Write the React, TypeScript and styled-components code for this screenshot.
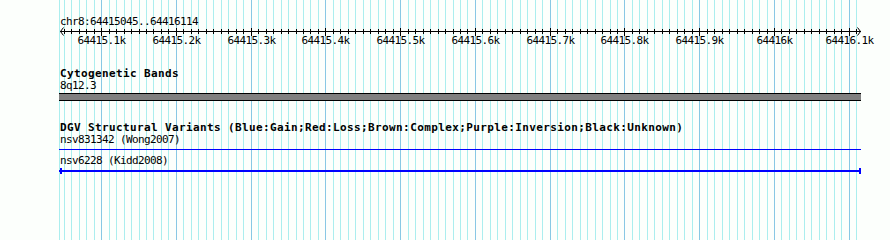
import React from 'react';
import styled, { createGlobalStyle } from 'styled-components';

const START = 64415045;
const END = 64416114;
const X0 = 60;
const PX = 800 / 1070;
const toX = (p: number) => Math.round(X0 + (p - START) * PX);

const gridPositions: { x: number; major: boolean }[] = [{ x: 59, major: false }];
for (let p = Math.ceil(START / 10) * 10; p <= END; p += 10) {
  gridPositions.push({ x: toX(p), major: p % 100 === 0 });
}

const majorLabels: { x: number; text: string }[] = [];
for (let p = Math.ceil(START / 100) * 100; p <= END; p += 100) {
  const k = p / 1000;
  majorLabels.push({ x: toX(p), text: `${Number.isInteger(k) ? k : k.toFixed(1)}k` });
}

const GlobalStyle = createGlobalStyle`
  html, body { margin: 0; padding: 0; background: #fcfffc; }
  #root { width: 890px; height: 240px; }
`;

const Panel = styled.div`
  position: relative;
  width: 890px;
  height: 240px;
  overflow: hidden;
  background: #fcfffc;
  font-family: "DejaVu Sans Mono", "Liberation Mono", monospace;
  color: #000;
`;

const GridLayer = styled.svg`
  position: absolute;
  left: 0;
  top: 0;
  width: 890px;
  height: 240px;
`;

const Tracks = styled.div`
  position: relative;
  display: flex;
  flex-direction: column;
  padding: 15px 0 0 60px;
`;

const Track = styled.section<{ $gapAfter?: number }>`
  display: flex;
  flex-direction: column;
  margin-bottom: ${(p) => p.$gapAfter ?? 0}px;
`;

const SmallText = styled.div<{ $lh?: number }>`
  font-size: 11px;
  letter-spacing: -0.62px;
  line-height: ${(p) => p.$lh ?? 12}px;
  height: ${(p) => p.$lh ?? 12}px;
  white-space: pre;
`;

const TrackTitle = styled.div`
  font-size: 11px;
  font-weight: bold;
  letter-spacing: 0.38px;
  line-height: 12px;
  height: 12px;
  white-space: pre;
`;

const Glyph = styled.svg<{ $h: number }>`
  display: block;
  width: 803px;
  height: ${(p) => p.$h}px;
  margin-left: -1px;
  overflow: visible;
  shape-rendering: crispEdges;
`;

const RulerLabel = styled.text`
  font-family: "DejaVu Sans Mono", "Liberation Mono", monospace;
  font-size: 11px;
  letter-spacing: -0.62px;
  fill: #000;
`;

const Grid = () => (
  <GridLayer viewBox="0 0 890 240" shapeRendering="crispEdges">
    {gridPositions.map((g, i) => (
      <rect key={i} x={g.x} y={0} width={1} height={240} fill={g.major ? '#88c8e4' : '#aaeeee'} />
    ))}
  </GridLayer>
);

const Ruler = () => {
  const top = 28;
  const ly = 31;
  return (
    <Glyph $h={40} viewBox={`59 ${top} 803 40`}>
      <rect x={60} y={ly} width={801} height={1} fill="#000" />
      {gridPositions.slice(1).map((g, i) => (
        <rect
          key={i}
          x={g.x}
          y={g.major ? ly - 3 : ly - 2}
          width={1}
          height={g.major ? 8 : 5}
          fill="#000"
        />
      ))}
      <g stroke="#000" strokeWidth={1} fill="none" shapeRendering="auto">
        <polyline points={`63.5,27.5 60.5,31.5 63.5,35.5`} />
        <polyline points={`857.5,27.5 860.5,31.5 857.5,35.5`} />
      </g>
      {majorLabels.map((m) => (
        <RulerLabel key={m.text} x={m.x + 0.5} y={44} textAnchor="middle">
          {m.text}
        </RulerLabel>
      ))}
    </Glyph>
  );
};

const BandBar = () => (
  <Glyph $h={9} viewBox="59 92 803 9">
    <rect x={59} y={93} width={802} height={1} fill="#000" />
    <rect x={59} y={94} width={802} height={6} fill="#808080" />
    <rect x={59} y={100} width={802} height={1} fill="#000" />
  </Glyph>
);

const SpanLine = ({
  top,
  h,
  lineY,
  thick = 1,
  caps,
}: {
  top: number;
  h: number;
  lineY: number;
  thick?: number;
  caps?: boolean;
}) => (
  <Glyph $h={h} viewBox={`59 ${top} 803 ${h}`}>
    <rect x={59} y={lineY} width={802} height={thick} fill="#0000ff" />
    {caps && (
      <>
        <rect x={60} y={lineY - 2} width={2} height={6} fill="#0000ff" />
        <rect x={859} y={lineY - 2} width={2} height={6} fill="#0000ff" />
      </>
    )}
  </Glyph>
);

export default function App() {
  return (
    <>
      <GlobalStyle />
      <Panel>
        <Grid />
        <Tracks>
          <Track>
            <SmallText $lh={13}>chr8:64415045..64416114</SmallText>
            <Ruler />
          </Track>
          <Track $gapAfter={21}>
            <TrackTitle>Cytogenetic Bands</TrackTitle>
            <SmallText>8q12.3</SmallText>
            <BandBar />
          </Track>
          <Track>
            <TrackTitle>
              DGV Structural Variants (Blue:Gain;Red:Loss;Brown:Complex;Purple:Inversion;Black:Unknown)
            </TrackTitle>
            <SmallText>nsv831342 (Wong2007)</SmallText>
            <SpanLine top={146} h={9} lineY={149} />
            <SmallText>nsv6228 (Kidd2008)</SmallText>
            <SpanLine top={167} h={8} lineY={170} thick={2} caps />
          </Track>
        </Tracks>
      </Panel>
    </>
  );
}
